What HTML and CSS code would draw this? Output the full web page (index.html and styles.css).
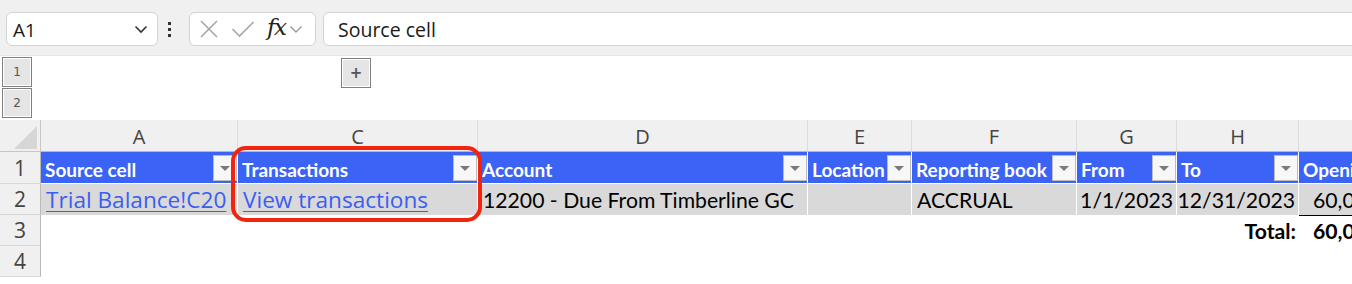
FILE: index.html
```html
<!DOCTYPE html>
<html>
<head>
<meta charset="utf-8">
<link rel="stylesheet" href="styles.css">
</head>
<body>
<div class="toolbar">
  <div class="namebox">
    <span class="nb-text">A1</span>
    <svg class="chev" width="14" height="9" viewBox="0 0 14 9"><path d="M1.5 1.5 L7 7 L12.5 1.5" fill="none" stroke="#333" stroke-width="1.6"/></svg>
  </div>
  <div class="dots"><i></i><i></i><i></i></div>
  <div class="fxbox">
    <svg class="ico-x" width="20" height="20" viewBox="0 0 20 20"><path d="M2 2 L18 18 M18 2 L2 18" stroke="#a6a6a6" stroke-width="1.6" fill="none"/></svg>
    <svg class="ico-ok" width="24" height="18" viewBox="0 0 24 18"><path d="M1.5 9 L8.5 16 L22.5 2" stroke="#a6a6a6" stroke-width="1.6" fill="none"/></svg>
    <span class="fx">fx</span>
    <svg class="chev-s" width="14" height="9" viewBox="0 0 14 9"><path d="M1.5 1.5 L7 7 L12.5 1.5" fill="none" stroke="#9a9a9a" stroke-width="1.4"/></svg>
  </div>
  <div class="formula">Source cell</div>
</div>

<div class="outline">
  <div class="levels">
    <div class="obtn">1</div>
    <div class="obtn">2</div>
  </div>
  <div class="obtn plus">+</div>
</div>

<div class="sheet">
  <div class="corner"><svg width="26" height="26" viewBox="0 0 26 26"><path d="M25 2 L25 25 L2 25 Z" fill="#d6d6d6"/></svg></div>
  <div class="ch">A</div>
  <div class="ch">C</div>
  <div class="ch">D</div>
  <div class="ch">E</div>
  <div class="ch">F</div>
  <div class="ch">G</div>
  <div class="ch">H</div>
  <div class="ch last"></div>

  <div class="rh">1</div>
  <div class="hc"><span>Source cell</span><b class="dd"></b></div>
  <div class="hc"><span>Transactions</span><b class="dd"></b></div>
  <div class="hc"><span>Account</span><b class="dd"></b></div>
  <div class="hc"><span>Location</span><b class="dd"></b></div>
  <div class="hc"><span>Reporting book</span><b class="dd"></b></div>
  <div class="hc"><span>From</span><b class="dd"></b></div>
  <div class="hc"><span>To</span><b class="dd"></b></div>
  <div class="hc"><span>Opening balance</span></div>

  <div class="rh">2</div>
  <div class="dc"><span class="link">Trial Balance!C20</span></div>
  <div class="dc tx">
    <span class="link">View transactions</span>
    <div class="ring"></div>
  </div>
  <div class="dc">12200 - Due From Timberline GC</div>
  <div class="dc"></div>
  <div class="dc">ACCRUAL</div>
  <div class="dc right">1/1/2023</div>
  <div class="dc right">12/31/2023</div>
  <div class="dc num">60,000.00</div>

  <div class="rh">3</div>
  <div class="ec"></div>
  <div class="ec"></div>
  <div class="ec"></div>
  <div class="ec"></div>
  <div class="ec"></div>
  <div class="ec"></div>
  <div class="ec total">Total:</div>
  <div class="ec num bold topline">60,000.00</div>

  <div class="rh">4</div>
  <div class="ec"></div><div class="ec"></div><div class="ec"></div><div class="ec"></div>
  <div class="ec"></div><div class="ec"></div><div class="ec"></div><div class="ec"></div>
</div>
</body>
</html>
```

FILE: styles.css
```css
html, body {
  margin: 0;
  padding: 0;
  background: #ffffff;
  width: 1352px;
  height: 284px;
  overflow: hidden;
}

.toolbar {
  height: 56px;
  background: #f0f0f0;
  box-sizing: border-box;
  padding: 12px 0 0 6px;
  display: flex;
  align-items: flex-start;
  border-bottom: 1px solid #e6e6e6;
}

.namebox {
  width: 152px;
  height: 34px;
  box-sizing: border-box;
  background: #fff;
  border: 1px solid #d3d3d3;
  border-radius: 6px;
  display: flex;
  align-items: center;
  justify-content: space-between;
  padding: 0 9px 0 6px;
  font-family: "Open Sans", "Noto Sans", sans-serif;
  font-size: 19px;
  color: #1a1a1a;
}
.nb-text { padding-top: 1px; }

.dots {
  width: 31px;
  height: 34px;
  display: flex;
  flex-direction: column;
  align-items: center;
  justify-content: center;
  gap: 3px;
  margin-left: -4px;
  margin-right: 4px;
}
.dots i {
  display: block;
  width: 3px;
  height: 3px;
  background: #333;
}

.fxbox {
  width: 127px;
  height: 34px;
  box-sizing: border-box;
  background: #fff;
  border: 1px solid #d3d3d3;
  border-radius: 6px;
  display: flex;
  align-items: center;
  padding-left: 9px;
}
.ico-x { margin-right: 12px; }
.ico-ok { margin-right: 12px; }
.fx {
  font-family: "DejaVu Serif", "Liberation Serif", serif;
  font-style: italic;
  font-size: 23px;
  color: #222;
  letter-spacing: -1.5px;
  margin-right: 4px;
  line-height: 1;
  padding-bottom: 3px;
}

.formula {
  flex: 1;
  margin-left: 7px;
  margin-right: -10px;
  height: 34px;
  box-sizing: border-box;
  background: #fff;
  border: 1px solid #d3d3d3;
  border-radius: 6px;
  padding-left: 14px;
  display: flex;
  align-items: center;
  font-family: "Open Sans", "Noto Sans", sans-serif;
  font-size: 19.5px;
  color: #1a1a1a;
}

.outline {
  height: 64px;
  box-sizing: border-box;
  padding-top: 1px;
  display: flex;
  align-items: flex-start;
  background: #fff;
}
.levels {
  display: flex;
  flex-direction: column;
  gap: 1px;
  margin-left: 2px;
}
.obtn {
  width: 30px;
  height: 30px;
  box-sizing: border-box;
  border: 1px solid #7f7f7f;
  box-shadow: inset 0 0 0 1px #ffffff;
  background: #e5e5e5;
  font-family: "DejaVu Sans", sans-serif;
  font-size: 12px;
  color: #555;
  display: flex;
  align-items: center;
  justify-content: center;
}
.obtn.plus {
  margin-left: 309px;
  margin-top: 1px;
  font-weight: bold;
  font-size: 15px;
  color: #555;
}

.sheet {
  display: grid;
  grid-template-columns: 41px 197px 240px 330px 104px 165px 100px 122px 80px;
  grid-template-rows: 32px 32px 31px 31px 31px;
  font-family: Lato, "Liberation Sans", sans-serif;
}

.corner {
  background: #f0f0f0;
  border-right: 1px solid #c6c6c6;
  border-bottom: 1px solid #c6c6c6;
  box-sizing: border-box;
  display: flex;
  align-items: flex-end;
  justify-content: flex-end;
  padding: 0 2px 1px 0;
}
.corner svg { display: block; }

.ch {
  background: #f0f0f0;
  border-right: 1px solid #dcdcdc;
  border-bottom: 1px solid #b9b9b9;
  box-sizing: border-box;
  font-family: "Open Sans", "Noto Sans", sans-serif;
  font-size: 20px;
  color: #444;
  display: flex;
  align-items: center;
  justify-content: center;
  padding-top: 1px;
}
.ch.last { border-right: none; }

.rh {
  background: #f0f0f0;
  border-right: 1px solid #b9b9b9;
  border-bottom: 1px solid #d8d8d8;
  box-sizing: border-box;
  font-family: "Open Sans", "Noto Sans", sans-serif;
  font-size: 21px;
  color: #444;
  display: flex;
  align-items: center;
  justify-content: center;
}

.hc {
  background: #3b63f6;
  color: #fff;
  font-weight: bold;
  font-size: 19px;
  border-right: 1px solid #fff;
  border-bottom: 1px solid #fff;
  box-sizing: border-box;
  display: flex;
  align-items: center;
  justify-content: space-between;
  padding-left: 4px;
  overflow: hidden;
  white-space: nowrap;
  position: relative;
}
.hc span { padding-top: 4px; }
.dd {
  position: absolute;
  right: 0;
  top: 3px;
  width: 24px;
  height: 26px;
  box-sizing: border-box;
  background: #f7f7f7;
  border: 1px solid #bcbcbc;
}
.dd::after {
  content: "";
  position: absolute;
  left: 6px;
  top: 10px;
  border-left: 5px solid transparent;
  border-right: 5px solid transparent;
  border-top: 5px solid #7a7a7a;
}

.dc {
  background: #d9d9d9;
  color: #000;
  font-size: 21.2px;
  border-right: 1px solid #fff;
  box-sizing: border-box;
  display: flex;
  align-items: center;
  padding-left: 5px;
  overflow: hidden;
  white-space: nowrap;
}
.dc.right { justify-content: flex-end; padding-right: 3px; }
.dc.num, .ec.num { padding-left: 14px; }
.dc.tx { overflow: visible; position: relative; }

.link {
  font-family: "Open Sans", "Noto Sans", sans-serif;
  font-size: 22.6px;
  color: #3a5df5;
  text-decoration: underline;
  text-decoration-thickness: 1px;
  text-underline-offset: 3px;
}

.ring {
  position: absolute;
  left: -7px;
  top: -38px;
  width: 251px;
  height: 76px;
  box-sizing: border-box;
  border: 4px solid #f2240e;
  border-radius: 15px;
  pointer-events: none;
}

.ec {
  box-sizing: border-box;
  display: flex;
  align-items: center;
  font-size: 21.2px;
  color: #000;
  white-space: nowrap;
  overflow: hidden;
}
.ec.total {
  justify-content: flex-end;
  padding-right: 3px;
  font-weight: bold;
}
.ec.bold { font-weight: bold; }
.ec.topline { border-top: 1.5px solid #000; }
```
